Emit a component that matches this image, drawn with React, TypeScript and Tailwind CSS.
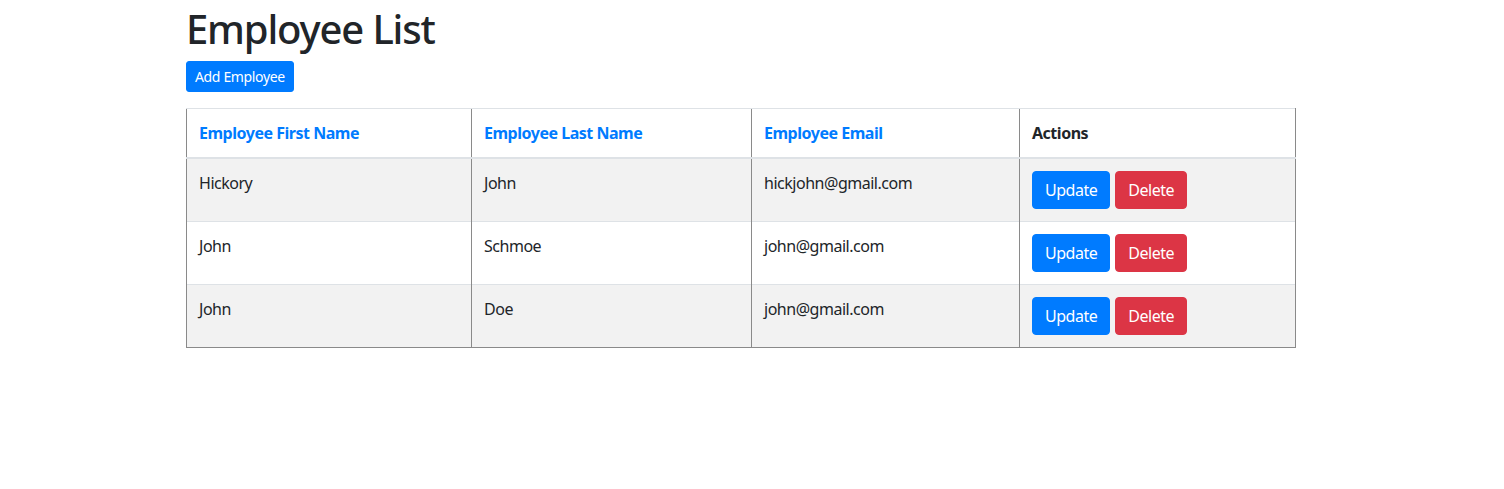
import type { JSX } from "react";

type Employee = {
  firstName: string;
  lastName: string;
  email: string;
};

const employees: Employee[] = [
  { firstName: "Hickory", lastName: "John", email: "hickjohn@gmail.com" },
  { firstName: "John", lastName: "Schmoe", email: "john@gmail.com" },
  { firstName: "John", lastName: "Doe", email: "john@gmail.com" },
];

export default function App(): JSX.Element {
  return (
    <div className="min-h-[489px] bg-white font-['Noto_Sans','Open_Sans',sans-serif] tracking-[-0.03em] text-[#212529]">
      <div className="ml-[186px] w-[1110px] pt-[5px]">
        <h1 className="mb-2 text-[40px] font-medium leading-[48px] tracking-[-0.029em]">
          Employee List
        </h1>
        <button className="rounded-[3px] border border-[#007bff] bg-[#007bff] px-2 py-1 text-sm leading-[21px] tracking-[-0.025em] text-white">
          Add Employee
        </button>

        {/* Employee Table */}
        <table className="mt-4 w-full border-collapse text-base leading-6">
          <thead>
            <tr>
              <th className="w-[285px] border-t border-b-2 border-l border-t-[#dee2e6] border-b-[#dee2e6] border-l-[#8a8a8a] p-3 text-left font-bold text-[#007bff]">
                Employee First Name
              </th>
              <th className="w-[280px] border-t border-b-2 border-l border-t-[#dee2e6] border-b-[#dee2e6] border-l-[#8a8a8a] p-3 text-left font-bold text-[#007bff]">
                Employee Last Name
              </th>
              <th className="w-[268px] border-t border-b-2 border-l border-t-[#dee2e6] border-b-[#dee2e6] border-l-[#8a8a8a] p-3 text-left font-bold text-[#007bff]">
                Employee Email
              </th>
              <th className="border-t border-r border-b-2 border-l border-t-[#dee2e6] border-r-[#8a8a8a] border-b-[#dee2e6] border-l-[#8a8a8a] p-3 text-left font-bold">
                Actions
              </th>
            </tr>
          </thead>
          <tbody>
            {employees.map((emp, idx) => {
              const last = idx === employees.length - 1;
              const rowBg = idx % 2 === 0 ? "bg-[#f2f2f2]" : "bg-white";
              const cell = `border-l border-t border-l-[#8a8a8a] border-t-[#dee2e6] p-3 align-top ${
                last ? "border-b border-b-[#8a8a8a]" : ""
              }`;
              return (
                <tr key={idx} className={rowBg}>
                  <td className={cell}>{emp.firstName}</td>
                  <td className={cell}>{emp.lastName}</td>
                  <td className={cell}>{emp.email}</td>
                  <td className={`${cell} border-r border-r-[#8a8a8a]`}>
                    <div className="flex gap-[5px]">
                      <button className="rounded border border-[#007bff] bg-[#007bff] px-3 py-1.5 text-base leading-6 text-white">
                        Update
                      </button>
                      <button className="rounded border border-[#dc3545] bg-[#dc3545] px-3 py-1.5 text-base leading-6 text-white">
                        Delete
                      </button>
                    </div>
                  </td>
                </tr>
              );
            })}
          </tbody>
        </table>
      </div>
    </div>
  );
}
